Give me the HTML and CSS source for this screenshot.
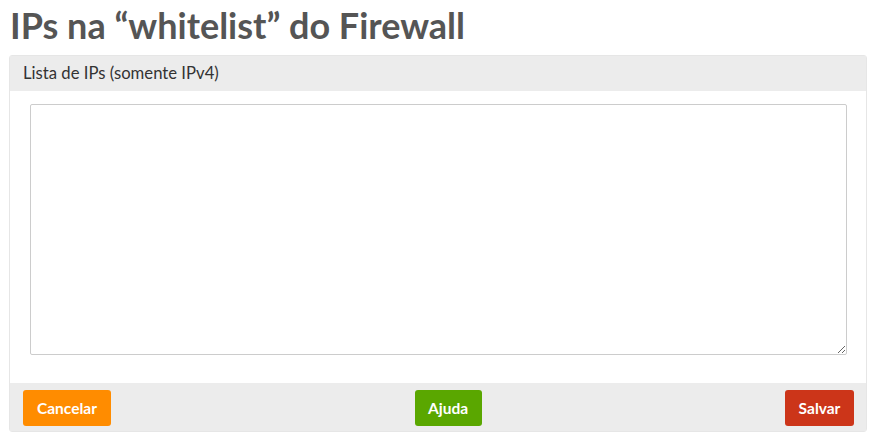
FILE: index.html
```html
<!DOCTYPE html>
<html lang="pt-BR">

<head>
  <meta charset="UTF-8">
  <meta name="viewport" content="width=device-width, initial-scale=1.0">
  <title>Whitelist do Firewall</title>
  <link rel="stylesheet" href="styles.css">
</head>

<body>
  <main class="page">
    <h1 class="page-title">IPs na “whitelist” do Firewall</h1>
    <form class="panel">
      <div class="panel-heading">Lista de IPs (somente IPv4)</div>
      <div class="panel-body">
        <textarea class="ip-list" name="ips"></textarea>
      </div>
      <div class="panel-footer">
        <button type="button" class="btn btn-cancel">Cancelar</button>
        <button type="button" class="btn btn-help">Ajuda</button>
        <button type="submit" class="btn btn-save">Salvar</button>
      </div>
    </form>
  </main>
</body>

</html>
```

FILE: styles.css
```css
body {
  margin: 0;
  padding: 0;
  background-color: #fff;
  font-family: Lato, "Open Sans", Arial, sans-serif;
  color: #333;
}

.page {
  padding: 0 12px 0 9px;
}

.page-title {
  margin: 0;
  padding: 3px 0 0 1px;
  height: 55px;
  box-sizing: border-box;
  font-size: 36px;
  font-weight: 700;
  line-height: 44px;
  color: #555;
}

.panel {
  border: 1px solid #e6e6e6;
  border-radius: 3px;
  background-color: #fff;
}

.panel-heading {
  height: 35px;
  padding: 0 13px;
  background-color: #ececec;
  font-size: 16.7px;
  line-height: 35px;
  color: #333;
}

.panel-body {
  padding: 13px 19px 28px 20px;
}

.ip-list {
  display: block;
  width: 100%;
  height: 251px;
  box-sizing: border-box;
  margin: 0;
  border: 1px solid #ccc;
  border-radius: 2px;
  resize: vertical;
}

.panel-footer {
  display: flex;
  justify-content: space-between;
  align-items: center;
  padding: 7px 12px 5px 13px;
  background-color: #ececec;
}

.btn {
  height: 36px;
  padding: 0;
  border: none;
  border-radius: 3px;
  font-family: Lato, Arial, sans-serif;
  font-size: 15.5px;
  font-weight: 700;
  color: #fff;
  cursor: pointer;
}

.btn-cancel {
  width: 88px;
  background-color: #ff8c00;
}

.btn-help {
  width: 67px;
  background-color: #5aa700;
}

.btn-save {
  width: 69px;
  background-color: #cc3519;
}
```
